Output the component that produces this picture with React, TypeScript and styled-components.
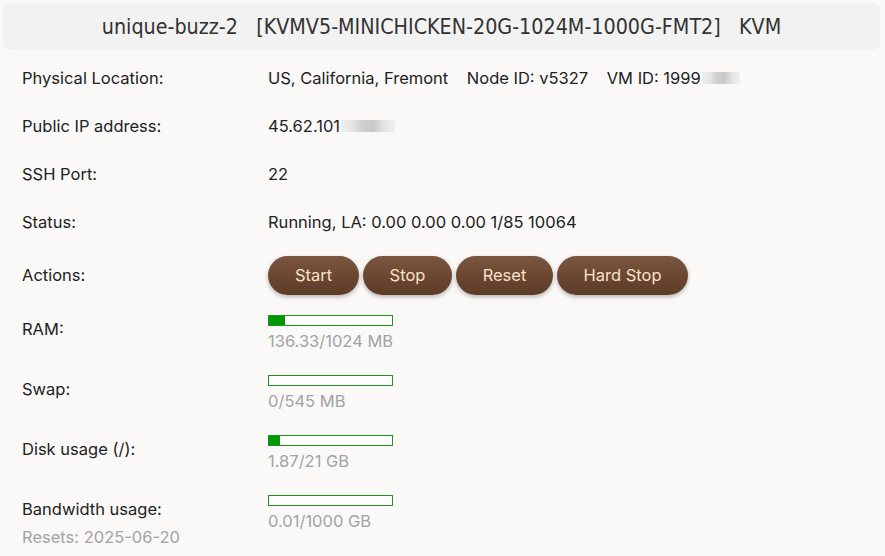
import React from "react";
import styled, { createGlobalStyle } from "styled-components";

const Global = createGlobalStyle`
  html, body { margin: 0; padding: 0; background: #faf9f8; }
  body { font-family: Inter, "Noto Sans", sans-serif; color: #222; }
`;

const Page = styled.div`
  width: 885px;
  height: 556px;
  overflow: hidden;
  padding: 3px 5px 0 3px;
  box-sizing: border-box;
`;

const TitleBar = styled.div`
  height: 47px;
  background: #f2f2f2;
  border-radius: 6px;
  display: flex;
  align-items: center;
  justify-content: center;
  font-family: "DejaVu Sans Condensed", "Liberation Sans Narrow", sans-serif;
  font-size: 21.3px;
  color: #333;
  white-space: pre;
`;

const Table = styled.div`
  display: flex;
  flex-direction: column;
  margin-top: 4px;
`;

const Row = styled.div<{ $h: number; $top?: boolean }>`
  display: flex;
  height: ${(p) => p.$h}px;
  align-items: ${(p) => (p.$top ? "flex-start" : "center")};
`;

const Label = styled.div<{ $pt?: number }>`
  width: 265px;
  flex: none;
  padding-left: 19px;
  box-sizing: border-box;
  font-size: 16.5px;
  line-height: 24px;
  padding-top: ${(p) => p.$pt ?? 0}px;
`;

const Sub = styled.div`
  color: #a3a3a3;
  margin-top: 4px;
`;

const Value = styled.div<{ $pt?: number }>`
  font-size: 16.5px;
  line-height: 24px;
  padding-top: ${(p) => p.$pt ?? 0}px;
  white-space: pre;
  display: flex;
  align-items: center;
`;

const Redacted = styled.span<{ $w: number }>`
  display: inline-block;
  width: ${(p) => p.$w}px;
  height: 12px;
  margin-left: 1px;
  background: linear-gradient(
    90deg,
    #eeeeee 0%,
    #e6e6e6 20%,
    #cfcfcf 40%,
    #c9c9c9 60%,
    #e4e4e4 80%,
    #f0f0f0 100%
  );
`;

const Buttons = styled.div`
  display: flex;
  gap: 4px;
`;

const Btn = styled.button<{ $w: number }>`
  width: ${(p) => p.$w}px;
  height: 39px;
  border: none;
  border-radius: 20px;
  background: linear-gradient(180deg, #7b5640 0%, #6a4631 55%, #5d3b27 100%);
  color: #f5e4c6;
  font-family: Inter, "Noto Sans", sans-serif;
  font-size: 16.5px;
  box-shadow: 0 2px 4px rgba(0, 0, 0, 0.28);
  cursor: pointer;
  padding: 0;
`;

const Meter = styled.div`
  display: flex;
  flex-direction: column;
`;

const Bar = styled.div`
  width: 125px;
  height: 11px;
  border: 1px solid #20901f;
  box-sizing: border-box;
  background: #fff;
`;

const Fill = styled.div`
  height: 100%;
  background: #009a00;
`;

const MeterText = styled.div`
  color: #a3a3a3;
  font-size: 16.5px;
  line-height: 24px;
  margin-top: 3px;
`;

function Usage({ used, total, unit }: { used: number; total: number; unit: string }) {
  const pct = Math.min(100, (used / total) * 100);
  return (
    <Meter>
      <Bar>
        <Fill style={{ width: `${pct}%` }} />
      </Bar>
      <MeterText>
        {used}/{total} {unit}
      </MeterText>
    </Meter>
  );
}

export default function App() {
  return (
    <>
      <Global />
      <Page>
        <TitleBar>unique-buzz-2   [KVMV5-MINICHICKEN-20G-1024M-1000G-FMT2]   KVM</TitleBar>
        <Table>
          <Row $h={48}>
            <Label>Physical Location:</Label>
            <Value>
              US, California, Fremont    Node ID: v5327    VM ID: 1999<Redacted $w={38} />
            </Value>
          </Row>
          <Row $h={48}>
            <Label>Public IP address:</Label>
            <Value>
              45.62.101<Redacted $w={54} />
            </Value>
          </Row>
          <Row $h={48}>
            <Label>SSH Port:</Label>
            <Value>22</Value>
          </Row>
          <Row $h={48}>
            <Label>Status:</Label>
            <Value>Running, LA: 0.00 0.00 0.00 1/85 10064</Value>
          </Row>
          <Row $h={58}>
            <Label>Actions:</Label>
            <Buttons>
              <Btn $w={91}>Start</Btn>
              <Btn $w={89}>Stop</Btn>
              <Btn $w={97}>Reset</Btn>
              <Btn $w={131}>Hard Stop</Btn>
            </Buttons>
          </Row>
          <Row $h={60} $top>
            <Label $pt={13}>RAM:</Label>
            <Value $pt={11}>
              <Usage used={136.33} total={1024} unit="MB" />
            </Value>
          </Row>
          <Row $h={60} $top>
            <Label $pt={13}>Swap:</Label>
            <Value $pt={11}>
              <Usage used={0} total={545} unit="MB" />
            </Value>
          </Row>
          <Row $h={60} $top>
            <Label $pt={13}>Disk usage (/):</Label>
            <Value $pt={11}>
              <Usage used={1.87} total={21} unit="GB" />
            </Value>
          </Row>
          <Row $h={72} $top>
            <Label $pt={13}>
              Bandwidth usage:
              <Sub>Resets: 2025-06-20</Sub>
            </Label>
            <Value $pt={11}>
              <Usage used={0.01} total={1000} unit="GB" />
            </Value>
          </Row>
        </Table>
      </Page>
    </>
  );
}
